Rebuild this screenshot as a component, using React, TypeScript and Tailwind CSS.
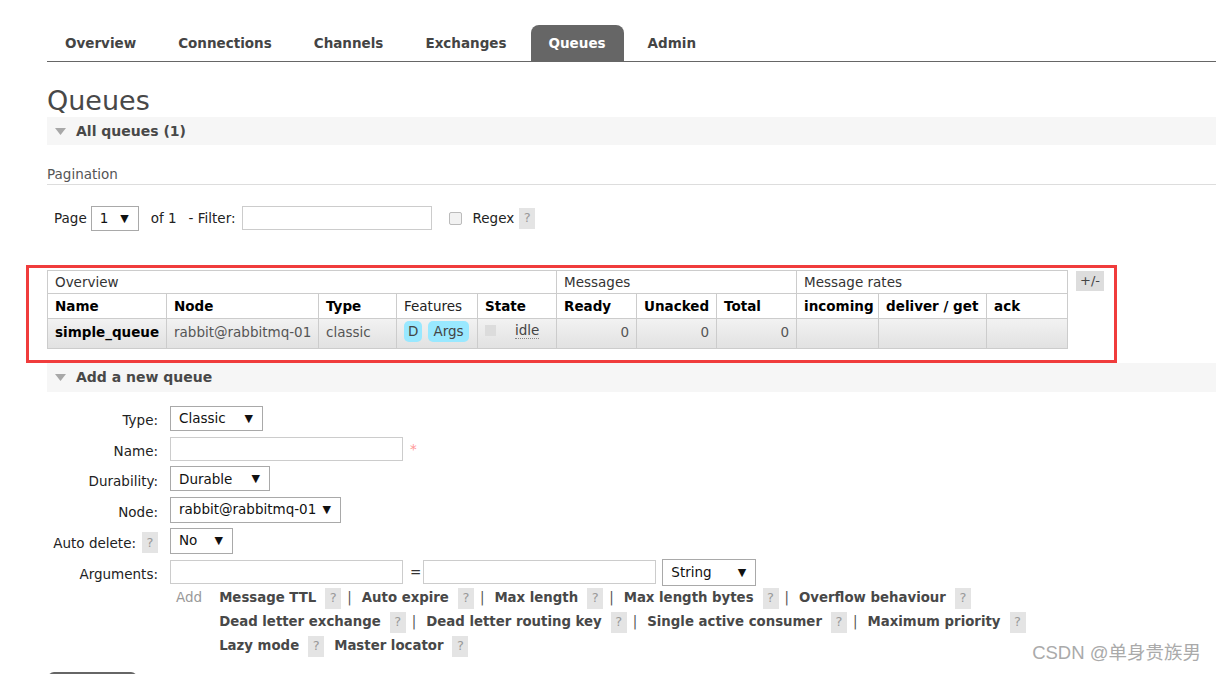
import React from 'react';

const tabs = ['Overview', 'Connections', 'Channels', 'Exchanges', 'Queues', 'Admin'];

function Tri() {
  return (
    <svg width="11" height="7" viewBox="0 0 11 7" className="shrink-0">
      <path d="M0 0 L11 0 L5.5 7 Z" fill="#a8a8a8" />
    </svg>
  );
}

function Select({ w, h = 25, children }: { w: string; h?: number; children: React.ReactNode }) {
  return (
    <div
      className={`${w} flex items-center justify-between border border-[#a9a9a9] bg-white pl-[8px] pr-[9px] text-[#111] shrink-0`}
      style={{ height: h }}
    >
      <span>{children}</span>
      <span className="text-[11px] leading-none">▼</span>
    </div>
  );
}

function Help({ className = '' }: { className?: string }) {
  return (
    <span className={`inline-flex h-[21px] w-[16px] items-center justify-center bg-[#e4e4e4] text-[13px] font-normal text-[#999] ${className}`}>
      ?
    </span>
  );
}

function SectionBar({ title, h }: { title: string; h: string }) {
  return (
    <div className={`${h} flex items-center gap-[10px] bg-[#f6f6f6] pl-[8px] text-[14px] font-bold text-[#484848]`}>
      <Tri />
      <span>{title}</span>
    </div>
  );
}

type Arg = { label: string; sep?: boolean };

const argRows: Arg[][] = [
  [
    { label: 'Message TTL', sep: true },
    { label: 'Auto expire', sep: true },
    { label: 'Max length', sep: true },
    { label: 'Max length bytes', sep: true },
    { label: 'Overflow behaviour' },
  ],
  [
    { label: 'Dead letter exchange', sep: true },
    { label: 'Dead letter routing key', sep: true },
    { label: 'Single active consumer', sep: true },
    { label: 'Maximum priority' },
  ],
  [{ label: 'Lazy mode' }, { label: 'Master locator' }],
];

export default function App() {
  const th = 'border border-[#ccc] px-[7px] text-left';
  const td = 'border border-[#ccc] px-[7px] align-top pt-[3px]';
  return (
    <div className="relative h-[674px] w-[1216px] overflow-hidden bg-white font-['DejaVu_Sans',sans-serif] text-[13.5px] text-[#222]">
      <div className="pl-[47px]">
        {/* tabs */}
        <div className="flex items-end gap-[6px] border-b border-[#666] pt-[25px]">
          {tabs.map((t) =>
            t === 'Queues' ? (
              <div key={t} className="flex h-[36px] items-center rounded-t-[8px] bg-[#666] px-[18px] font-bold text-white">
                {t}
              </div>
            ) : (
              <div key={t} className="flex h-[36px] items-center px-[18px] font-bold text-[#444]">
                {t}
              </div>
            )
          )}
        </div>

        <h1 className="mt-[24px] text-[27px] leading-[30px] text-[#484848]">Queues</h1>
        <div className="mt-[1px]">
          <SectionBar title="All queues (1)" h="h-[28px]" />
        </div>

        <div className="mt-[20px] border-b border-[#ddd] pb-[1px] leading-[18px] text-[#555]">Pagination</div>

        {/* pagination row */}
        <div className="mt-[20px] flex h-[26px] items-center pl-[7px] text-[#222]">
          <span>Page</span>
          <div className="ml-[4px]">
            <Select w="w-[48px]">1</Select>
          </div>
          <span className="ml-[12px]">of 1</span>
          <span className="ml-[12px]">- Filter:</span>
          <div className="ml-[6px] h-[24px] w-[190px] border border-[#ccc] bg-white" />
          <div className="ml-[17px] h-[13px] w-[13px] rounded-[2px] border border-[#bbb] bg-[#f2f2f2]" />
          <span className="ml-[11px]">Regex</span>
          <Help className="ml-[5px]" />
        </div>

        {/* table with highlight */}
        <div className="-ml-[21px] mt-[34px] flex w-[1091px] items-start border-[3px] border-[#f03c3c] pb-[11px] pl-[18px] pt-[2px]">
          <table className="w-[1020px] table-fixed border-collapse border border-[#ccc]">
            <colgroup>
              {[119, 152, 78, 81, 79, 80, 80, 80, 82, 108, 81].map((w, i) => (
                <col key={i} style={{ width: w }} />
              ))}
            </colgroup>
            <thead>
              <tr className="h-[23px]">
                <th colSpan={5} className={`${th} font-normal text-[#333]`}>Overview</th>
                <th colSpan={3} className={`${th} font-normal text-[#333]`}>Messages</th>
                <th colSpan={3} className={`${th} font-normal text-[#333]`}>Message rates</th>
              </tr>
              <tr className="h-[25px] text-black">
                <th className={`${th} font-bold`}>Name</th>
                <th className={`${th} font-bold`}>Node</th>
                <th className={`${th} font-bold`}>Type</th>
                <th className={`${th} font-normal text-[#222]`}>Features</th>
                <th className={`${th} font-bold`}>State</th>
                <th className={`${th} font-bold`}>Ready</th>
                <th className={`${th} font-bold`}>Unacked</th>
                <th className={`${th} font-bold`}>Total</th>
                <th className={`${th} font-bold`}>incoming</th>
                <th className={`${th} whitespace-nowrap font-bold`}>deliver / get</th>
                <th className={`${th} font-bold`}>ack</th>
              </tr>
            </thead>
            <tbody>
              <tr className="h-[30px] bg-gradient-to-b from-[#f2f2f2] to-[#e1e1e1] text-[#555]">
                <td className={`${td} font-bold text-black`}>simple_queue</td>
                <td className={`${td} whitespace-nowrap`}>rabbit@rabbitmq-01</td>
                <td className={td}>classic</td>
                <td className="border border-[#ccc] px-[7px] pt-[2px] align-top">
                  <div className="flex gap-[6px] text-[#444]">
                    <span className="flex h-[21px] items-center rounded-[5px] bg-[#99e8ff] px-[4px]">D</span>
                    <span className="flex h-[21px] items-center rounded-[5px] bg-[#99e8ff] px-[5px]">Args</span>
                  </div>
                </td>
                <td className={td}>
                  <div className="flex items-center">
                    <span className="h-[11px] w-[11px] bg-[#dcdcdc]" />
                    <span className="ml-[19px] border-b border-dotted border-[#888] leading-[16px] text-[#444]">idle</span>
                  </div>
                </td>
                <td className={`${td} text-right`}>0</td>
                <td className={`${td} text-right`}>0</td>
                <td className={`${td} text-right`}>0</td>
                <td className={td} />
                <td className={td} />
                <td className={td} />
              </tr>
            </tbody>
          </table>
          <div className="ml-[8px] mt-[1px] flex h-[20px] w-[28px] items-center justify-center bg-[#ddd] text-[13px] text-[#444]">
            +/-
          </div>
        </div>

        <SectionBar title="Add a new queue" h="h-[29px]" />

        {/* form */}
        <div className="mt-[14px] flex flex-col gap-[5px]">
          <div className="flex items-center">
            <span className="w-[111px] pt-[4px] text-right">Type:</span>
            <div className="ml-[12px]">
              <Select w="w-[93px]">Classic</Select>
            </div>
          </div>
          <div className="flex items-center">
            <span className="w-[111px] pt-[5px] text-right">Name:</span>
            <div className="ml-[12px] h-[24px] w-[233px] border border-[#ccc] bg-white" />
            <span className="ml-[7px] text-[#f99]">*</span>
          </div>
          <div className="flex items-center">
            <span className="w-[111px] pt-[5px] text-right">Durability:</span>
            <div className="ml-[12px]">
              <Select w="w-[100px]">Durable</Select>
            </div>
          </div>
          <div className="flex items-center">
            <span className="w-[111px] pt-[5px] text-right">Node:</span>
            <div className="ml-[12px]">
              <Select w="w-[171px]" h={26}>rabbit@rabbitmq-01</Select>
            </div>
          </div>
          <div className="flex items-center">
            <div className="flex w-[111px] items-center justify-end">
              <span className="pt-[5px]">Auto delete:</span>
              <Help className="ml-[6px] mt-[4px]" />
            </div>
            <div className="ml-[12px]">
              <Select w="w-[63px]" h={26}>No</Select>
            </div>
          </div>
          <div className="flex items-center">
            <span className="w-[111px] pt-[4px] text-right">Arguments:</span>
            <div className="ml-[12px] h-[24px] w-[233px] border border-[#ccc] bg-white" />
            <span className="ml-[7px] text-[#333]">=</span>
            <div className="ml-[2px] h-[24px] w-[233px] border border-[#ccc] bg-white" />
            <div className="ml-[6px]">
              <Select w="w-[94px]" h={27}>String</Select>
            </div>
          </div>
        </div>

        <div className="mt-[1px] flex">
          <span className="ml-[129px] text-[#999]">Add</span>
          <div className="ml-[17px] flex flex-col gap-[3px] pt-[1px] text-[13.3px]">
            {argRows.map((row, ri) => (
              <div key={ri} className="flex items-center">
                {row.map((a, i) => (
                  <div key={i} className="flex items-center">
                    <span className="font-bold text-[#484848]">{a.label}</span>
                    <Help className="ml-[9px]" />
                    {a.sep ? (
                      <span className="ml-[6px] mr-[10px] text-[#555]">|</span>
                    ) : (
                      <span className="w-[10px]" />
                    )}
                  </div>
                ))}
              </div>
            ))}
          </div>
        </div>

        <div className="mt-[15px] ml-[1px] h-[30px] w-[89px] rounded-[6px] bg-[#666]" />
      </div>

      <div className="absolute bottom-[7px] right-[15px] font-['Liberation_Sans','Noto_Sans_CJK_SC',sans-serif] text-[18.5px] text-[#aaa]">
        CSDN @单身贵族男
      </div>
    </div>
  );
}
